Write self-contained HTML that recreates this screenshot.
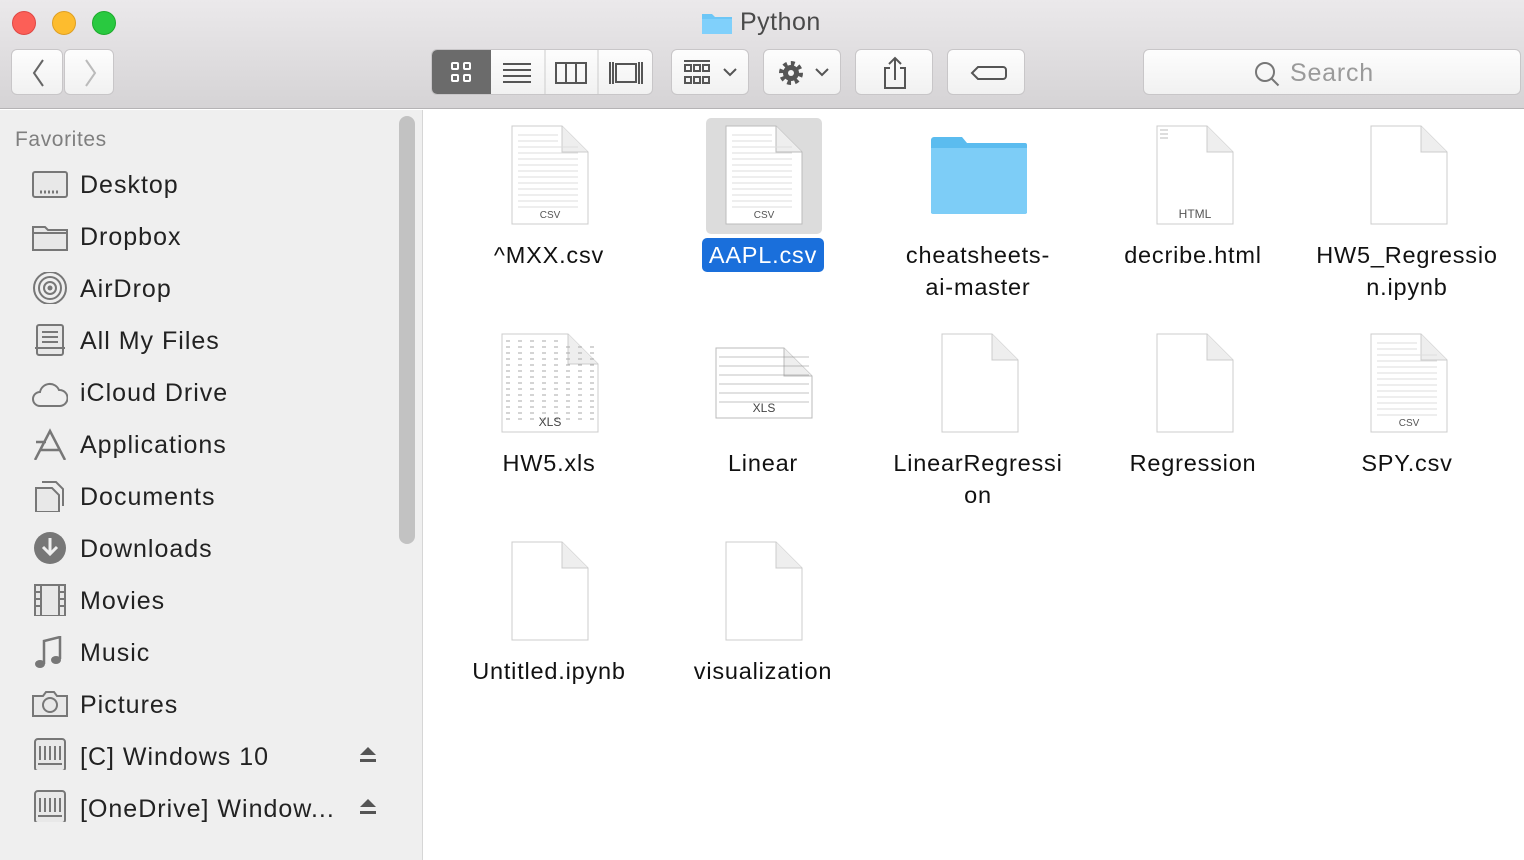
<!DOCTYPE html>
<html><head><meta charset="utf-8"><style>
*{margin:0;padding:0;box-sizing:border-box}
body{width:1524px;height:860px;overflow:hidden;font-family:"Liberation Sans",sans-serif;background:#fff;position:relative}
#top{position:absolute;left:0;top:0;width:1524px;height:109px;background:linear-gradient(#ebe9eb,#d5d3d5);border-bottom:1px solid #b5b3b5}
.dot{position:absolute;top:11px;width:24px;height:24px;border-radius:50%}
.title{position:absolute;left:740px;top:8px;font-size:25px;color:#4a4a4a;letter-spacing:.5px}
.btn{position:absolute;top:49px;height:46px;background:linear-gradient(#fdfdfd,#f1f1f1);border:1px solid #c8c6c8;border-radius:6px}
#side{position:absolute;left:0;top:110px;width:423px;height:750px;background:#efefef;border-right:1px solid #d6d6d6}
.fav{position:absolute;left:15px;top:128px;font-size:21px;color:#7f7f7f;letter-spacing:.6px}
.it{position:absolute;left:80px;font-size:25px;color:#222;line-height:30px;letter-spacing:1px}
.ic{position:absolute;left:32px;width:36px;height:32px}
.scroll{position:absolute;left:399px;top:116px;width:16px;height:428px;background:#c2c2c2;border-radius:8px}
.f{position:absolute;width:240px;text-align:center;font-size:23.5px;line-height:32px;color:#111;letter-spacing:.8px}
.doc{position:absolute}
</style></head><body>
<div id="top">
<div class="dot" style="left:12px;background:#fc5f57;border:1px solid #df4744"></div>
<div class="dot" style="left:52px;background:#fdbc2e;border:1px solid #de9f23"></div>
<div class="dot" style="left:92px;background:#29c940;border:1px solid #1daa2c"></div>
<svg style="position:absolute;left:701px;top:11px" width="32" height="24"><path d="M1 3h10l3 3h17v17H1z" fill="#6cc6f6"/><path d="M1 8h30v15H1z" fill="#80d0fb"/></svg>
<div class="title">Python</div>
<div class="btn" style="left:11px;width:52px"><svg width="52" height="46"><path d="M31 10L22 23l9 13" stroke="#666" stroke-width="2" fill="none"/></svg></div>
<div class="btn" style="left:64px;width:50px"><svg width="50" height="46"><path d="M21 10l9 13-9 13" stroke="#bbb" stroke-width="2" fill="none"/></svg></div>
<div class="btn" style="left:431px;width:222px;overflow:hidden">
<div style="position:absolute;left:0;top:0;width:59px;height:46px;background:#6b6b6b"></div>
<svg width="222" height="46" style="position:absolute;left:0;top:0">
<g fill="none" stroke="#fff" stroke-width="2"><rect x="20" y="13" width="6" height="6" rx="1"/><rect x="32" y="13" width="6" height="6" rx="1"/><rect x="20" y="25" width="6" height="6" rx="1"/><rect x="32" y="25" width="6" height="6" rx="1"/></g>
<g stroke="#555" stroke-width="2" fill="none"><path d="M71 14h28M71 20h28M71 26h28M71 32h28"/><rect x="124" y="13" width="30" height="20"/><path d="M134 13v20M144 13v20"/><rect x="184" y="14" width="20" height="18"/><path d="M178 12v22M181 12v22M207 12v22M210 12v22"/></g>
<path d="M113 0v46M166 0v46" stroke="#ccc"/></svg></div>
<div class="btn" style="left:671px;width:78px"><svg width="78" height="46"><g fill="none" stroke="#555" stroke-width="2"><rect x="13" y="15" width="6" height="6"/><rect x="22" y="15" width="6" height="6"/><rect x="31" y="15" width="6" height="6"/><rect x="13" y="27" width="6" height="6"/><rect x="22" y="27" width="6" height="6"/><rect x="31" y="27" width="6" height="6"/><path d="M12 11h26M52 19l6 6 6-6"/></g></svg></div>
<div class="btn" style="left:763px;width:78px"><svg width="78" height="46"><circle cx="27" cy="23" r="9" fill="none" stroke="#555" stroke-width="6" stroke-dasharray="3.5 3.5"/><circle cx="27" cy="23" r="8" fill="#555"/><circle cx="27" cy="23" r="3" fill="#f5f5f5"/><path d="M52 19l6 6 6-6" fill="none" stroke="#555" stroke-width="2"/></svg></div>
<div class="btn" style="left:855px;width:78px"><svg width="78" height="46"><path d="M34 18h-5v20h20V18h-5M39 30V8M33 14l6-6 6 6" fill="none" stroke="#555" stroke-width="2"/></svg></div>
<div class="btn" style="left:947px;width:78px"><svg width="78" height="46"><path d="M30 17h25a3 3 0 0 1 3 3v6a3 3 0 0 1-3 3H30l-6-6z" fill="none" stroke="#555" stroke-width="2"/></svg></div>
<div class="btn" style="left:1143px;width:378px"><svg style="position:absolute;left:110px;top:11px" width="26" height="26"><circle cx="11" cy="11" r="9" fill="none" stroke="#777" stroke-width="2"/><path d="M17.5 17.5l7 7" stroke="#777" stroke-width="2"/></svg><span style="position:absolute;left:146px;top:9px;font-size:25px;color:#9a9a9a;letter-spacing:.8px">Search</span></div>
</div>
<div id="side">
<div class="scroll" style="top:6px"></div>
</div>
<div class="fav">Favorites</div>
<svg class="ic" style="top:170px"><rect x="1" y="2" width="34" height="25" rx="2" fill="#e8e8e8" stroke="#777" stroke-width="2"/><path d="M8 22h20" stroke="#777" stroke-width="3" stroke-dasharray="2 2"/></svg><div class="it" style="top:170px">Desktop</div>
<svg class="ic" style="top:222px"><path d="M1 5h12l3 3h19v20H1z" fill="#e8e8e8" stroke="#777" stroke-width="2"/><path d="M1 11h34" stroke="#777" stroke-width="2"/></svg><div class="it" style="top:222px">Dropbox</div>
<svg class="ic" style="top:272px"><g fill="none" stroke="#777" stroke-width="2"><circle cx="18" cy="16" r="16"/><circle cx="18" cy="16" r="11"/><circle cx="18" cy="16" r="6"/></g><circle cx="18" cy="16" r="2.5" fill="#777"/></svg><div class="it" style="top:274px">AirDrop</div>
<svg class="ic" style="top:324px"><rect x="5" y="1" width="26" height="30" rx="2" fill="#e8e8e8" stroke="#777" stroke-width="2"/><path d="M10 8h16M10 13h16M10 18h16M3 24h30" stroke="#777" stroke-width="2"/></svg><div class="it" style="top:326px">All My Files</div>
<svg class="ic" style="top:378px"><path d="M8 28a7 7 0 0 1 0-14 10 10 0 0 1 19-2 8 8 0 0 1 1 16z" fill="none" stroke="#777" stroke-width="2"/></svg><div class="it" style="top:378px">iCloud Drive</div>
<svg class="ic" style="top:428px"><path d="M3 32L18 3l15 29M8 22h20M4 14h10" fill="none" stroke="#777" stroke-width="2.5"/></svg><div class="it" style="top:430px">Applications</div>
<svg class="ic" style="top:480px"><path d="M4 8h16l7 7v17H4z" fill="#e8e8e8" stroke="#777" stroke-width="2"/><path d="M10 2h14l7 7v17" fill="none" stroke="#777" stroke-width="2"/></svg><div class="it" style="top:482px">Documents</div>
<svg class="ic" style="top:532px"><circle cx="18" cy="16" r="16" fill="#777"/><path d="M18 6v16M11 15l7 7 7-7" fill="none" stroke="#efefef" stroke-width="3"/></svg><div class="it" style="top:534px">Downloads</div>
<svg class="ic" style="top:584px"><rect x="3" y="1" width="30" height="31" fill="#e8e8e8" stroke="#777" stroke-width="2"/><path d="M9 1v31M27 1v31M3 8h6M3 15h6M3 22h6M27 8h6M27 15h6M27 22h6" stroke="#777" stroke-width="2"/></svg><div class="it" style="top:586px">Movies</div>
<svg class="ic" style="top:636px"><path d="M12 28V5l16-4v22" fill="none" stroke="#777" stroke-width="2.5"/><ellipse cx="8" cy="28" rx="5" ry="4" fill="#777"/><ellipse cx="24" cy="24" rx="5" ry="4" fill="#777"/></svg><div class="it" style="top:638px">Music</div>
<svg class="ic" style="top:688px"><path d="M1 8h10l3-4h8l3 4h10v20H1z" fill="#e8e8e8" stroke="#777" stroke-width="2"/><circle cx="18" cy="17" r="7" fill="none" stroke="#777" stroke-width="2"/></svg><div class="it" style="top:690px">Pictures</div>
<svg class="ic" style="top:738px"><rect x="3" y="1" width="30" height="32" rx="3" fill="#e8e8e8" stroke="#777" stroke-width="2"/><path d="M8 8v14M13 8v14M18 8v14M23 8v14M28 8v14M6 26h24" stroke="#777" stroke-width="2"/></svg><div class="it" style="top:742px">[C] Windows 10</div>
<svg class="ic" style="top:790px"><rect x="3" y="1" width="30" height="32" rx="3" fill="#e8e8e8" stroke="#777" stroke-width="2"/><path d="M8 8v14M13 8v14M18 8v14M23 8v14M28 8v14M6 26h24" stroke="#777" stroke-width="2"/></svg><div class="it" style="top:794px">[OneDrive] Window...</div>
<svg style="position:absolute;left:358px;top:745px" width="20" height="20"><path d="M2 10L10 2l8 8z M2 14h16v3H2z" fill="#555"/></svg>
<svg style="position:absolute;left:358px;top:797px" width="20" height="20"><path d="M2 10L10 2l8 8z M2 14h16v3H2z" fill="#555"/></svg>

<div style="position:absolute;left:706px;top:118px;width:116px;height:116px;background:#dcdcdc;border-radius:5px"></div>
<div style="position:absolute;left:702px;top:238px;width:122px;height:34px;background:#1a6fdb;border-radius:5px"></div>

<svg class="doc" style="left:511px;top:125px" width="78" height="100"><path d="M1 1h50l26 26v72H1z" fill="#fff" stroke="#ccc"/><path d="M51 1v26h26" fill="#eee" stroke="#ccc"/><g stroke="#ddd"><path d="M7 10h40M7 16h40M7 22h60M7 28h60M7 34h60M7 40h60M7 46h60M7 52h60M7 58h60M7 64h60M7 70h60M7 76h60M7 82h60"/></g><text x="39" y="93" font-size="10" text-anchor="middle" fill="#555" font-family="Liberation Sans">CSV</text></svg>
<svg class="doc" style="left:725px;top:125px" width="78" height="100"><path d="M1 1h50l26 26v72H1z" fill="#fff" stroke="#bbb"/><path d="M51 1v26h26" fill="#eee" stroke="#bbb"/><g stroke="#ddd"><path d="M7 10h40M7 16h40M7 22h60M7 28h60M7 34h60M7 40h60M7 46h60M7 52h60M7 58h60M7 64h60M7 70h60M7 76h60M7 82h60"/></g><text x="39" y="93" font-size="10" text-anchor="middle" fill="#555" font-family="Liberation Sans">CSV</text></svg>
<svg class="doc" style="left:930px;top:136px" width="98" height="80"><path d="M1 4a3 3 0 0 1 3-3h28l5 6h58a2 2 0 0 1 2 2v68H1z" fill="#5bbcef"/><path d="M1 12h96v64a2 2 0 0 1-2 2H3a2 2 0 0 1-2-2z" fill="#7dcdf7"/></svg>
<svg class="doc" style="left:1156px;top:125px" width="78" height="100"><path d="M1 1h50l26 26v72H1z" fill="#fff" stroke="#ccc"/><path d="M51 1v26h26" fill="#eee" stroke="#ccc"/><path d="M4 5h8M4 9h8M4 13h8" stroke="#bbb"/><text x="39" y="93" font-size="12" text-anchor="middle" fill="#555" font-family="Liberation Sans">HTML</text></svg>
<svg class="doc" style="left:1370px;top:125px" width="78" height="100"><path d="M1 1h50l26 26v72H1z" fill="#fff" stroke="#ccc"/><path d="M51 1v26h26" fill="#eee" stroke="#ccc"/></svg>

<svg class="doc" style="left:501px;top:333px" width="98" height="100"><path d="M1 1h66l30 30v68H1z" fill="#fff" stroke="#ccc"/><path d="M67 1v30h30" fill="#eee" stroke="#ccc"/><g stroke="#aaa"><path d="M5 8h60M5 14h88M5 20h88M5 26h88M5 32h88M5 38h88M5 44h88M5 50h88M5 56h88M5 62h88M5 68h88M5 74h88M5 80h88M5 86h88" stroke-dasharray="4 8"/></g><text x="49" y="93" font-size="12" text-anchor="middle" fill="#444" font-family="Liberation Sans">XLS</text></svg>
<svg class="doc" style="left:715px;top:347px" width="98" height="72"><path d="M1 1h68l28 28v42H1z" fill="#fff" stroke="#bbb"/><path d="M69 1v28h28" fill="#eee" stroke="#bbb"/><g stroke="#888" stroke-width=".6"><path d="M4 10h90M4 19h90M4 28h90M4 37h90M4 46h90M4 55h90"/></g><text x="49" y="65" font-size="12" text-anchor="middle" fill="#444" font-family="Liberation Sans">XLS</text></svg>
<svg class="doc" style="left:941px;top:333px" width="78" height="100"><path d="M1 1h50l26 26v72H1z" fill="#fff" stroke="#ccc"/><path d="M51 1v26h26" fill="#eee" stroke="#ccc"/></svg>
<svg class="doc" style="left:1156px;top:333px" width="78" height="100"><path d="M1 1h50l26 26v72H1z" fill="#fff" stroke="#ccc"/><path d="M51 1v26h26" fill="#eee" stroke="#ccc"/></svg>
<svg class="doc" style="left:1370px;top:333px" width="78" height="100"><path d="M1 1h50l26 26v72H1z" fill="#fff" stroke="#ccc"/><path d="M51 1v26h26" fill="#eee" stroke="#ccc"/><g stroke="#ddd"><path d="M7 10h40M7 16h40M7 22h60M7 28h60M7 34h60M7 40h60M7 46h60M7 52h60M7 58h60M7 64h60M7 70h60M7 76h60M7 82h60"/></g><text x="39" y="93" font-size="10" text-anchor="middle" fill="#555" font-family="Liberation Sans">CSV</text></svg>

<svg class="doc" style="left:511px;top:541px" width="78" height="100"><path d="M1 1h50l26 26v72H1z" fill="#fff" stroke="#ccc"/><path d="M51 1v26h26" fill="#eee" stroke="#ccc"/></svg>
<svg class="doc" style="left:725px;top:541px" width="78" height="100"><path d="M1 1h50l26 26v72H1z" fill="#fff" stroke="#ccc"/><path d="M51 1v26h26" fill="#eee" stroke="#ccc"/></svg>

<div class="f" style="left:429px;top:239px">^MXX.csv</div>
<div class="f" style="left:643px;top:239px;color:#fff">AAPL.csv</div>
<div class="f" style="left:858px;top:239px">cheatsheets-<br>ai-master</div>
<div class="f" style="left:1073px;top:239px">decribe.html</div>
<div class="f" style="left:1287px;top:239px">HW5_Regressio<br>n.ipynb</div>
<div class="f" style="left:429px;top:447px">HW5.xls</div>
<div class="f" style="left:643px;top:447px">Linear</div>
<div class="f" style="left:858px;top:447px">LinearRegressi<br>on</div>
<div class="f" style="left:1073px;top:447px">Regression</div>
<div class="f" style="left:1287px;top:447px">SPY.csv</div>
<div class="f" style="left:429px;top:655px">Untitled.ipynb</div>
<div class="f" style="left:643px;top:655px">visualization</div>
</body></html>
